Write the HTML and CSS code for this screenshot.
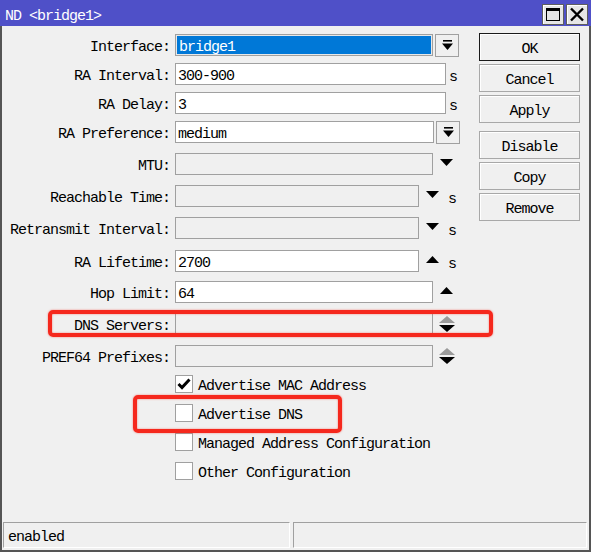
FILE: index.html
```html
<!DOCTYPE html>
<html>
<head>
<meta charset="utf-8">
<link rel="stylesheet" href="styles.css">
</head>
<body>
<div class="window">
  <div class="titlebar">
    <span class="title">ND &lt;bridge1&gt;</span>
    <div class="tb-buttons">
      <span class="tb-btn"><svg width="20" height="19" viewBox="0 0 20 19"><rect x="3.5" y="3.5" width="13" height="12" fill="none" stroke="#000" stroke-width="1"/><rect x="3" y="3" width="14" height="3" fill="#000"/></svg></span>
      <span class="tb-btn"><svg width="20" height="19" viewBox="0 0 20 19"><path d="M4 3.5 L16 15.5 M16 3.5 L4 15.5" stroke="#000" stroke-width="2.4"/></svg></span>
    </div>
  </div>
  <div class="frame">
    <div class="content">
      <div class="form">
        <div class="row g7">
          <label>Interface:</label>
          <div class="field"><div class="input sel w258">bridge1</div><div class="ddbtn"><svg width="11" height="11" viewBox="0 0 11 11"><rect x="1" y="0" width="9" height="1.6" fill="#000"/><polygon points="0,3.5 11,3.5 5.5,10" fill="#000"/></svg></div></div>
        </div>
        <div class="row g7">
          <label>RA Interval:</label>
          <div class="field"><div class="input w271">300-900</div><span class="unit u3">s</span></div>
        </div>
        <div class="row g7">
          <label>RA Delay:</label>
          <div class="field"><div class="input w271">3</div><span class="unit u3">s</span></div>
        </div>
        <div class="row g10">
          <label>RA Preference:</label>
          <div class="field"><div class="input w259">medium</div><div class="ddbtn"><svg width="11" height="11" viewBox="0 0 11 11"><rect x="1" y="0" width="9" height="1.6" fill="#000"/><polygon points="0,3.5 11,3.5 5.5,10" fill="#000"/></svg></div></div>
        </div>
        <div class="row g10">
          <label>MTU:</label>
          <div class="field"><div class="input dis w258"></div><svg class="tri" width="13" height="7" viewBox="0 0 13 7"><polygon points="0,0 13,0 6.5,7" fill="#000"/></svg></div>
        </div>
        <div class="row g10">
          <label>Reachable Time:</label>
          <div class="field"><div class="input dis w244"></div><svg class="tri" width="13" height="7" viewBox="0 0 13 7"><polygon points="0,0 13,0 6.5,7" fill="#000"/></svg><span class="unit u9">s</span></div>
        </div>
        <div class="row g11">
          <label>Retransmit Interval:</label>
          <div class="field"><div class="input dis w244"></div><svg class="tri" width="13" height="7" viewBox="0 0 13 7"><polygon points="0,0 13,0 6.5,7" fill="#000"/></svg><span class="unit u9">s</span></div>
        </div>
        <div class="row g9">
          <label>RA Lifetime:</label>
          <div class="field"><div class="input w244">2700</div><svg class="tri" width="13" height="7" viewBox="0 0 13 7"><polygon points="0,7 13,7 6.5,0" fill="#000"/></svg><span class="unit u9">s</span></div>
        </div>
        <div class="row g10">
          <label>Hop Limit:</label>
          <div class="field"><div class="input w258">64</div><svg class="tri" width="13" height="7" viewBox="0 0 13 7"><polygon points="0,7 13,7 6.5,0" fill="#000"/></svg></div>
        </div>
        <div class="row g10">
          <label>DNS Servers:</label>
          <div class="field"><div class="input dis w258"></div><svg class="updown" width="16" height="17" viewBox="0 0 16 17"><polygon points="0,7 16,7 8,0" fill="#9a9a9a"/><polygon points="0,9 16,9 8,16" fill="#000"/></svg></div>
        </div>
        <div class="row">
          <label>PREF64 Prefixes:</label>
          <div class="field"><div class="input dis w258"></div><svg class="updown" width="16" height="17" viewBox="0 0 16 17"><polygon points="0,7 16,7 8,0" fill="#9a9a9a"/><polygon points="0,9 16,9 8,16" fill="#000"/></svg></div>
        </div>
        <div class="checks">
          <div class="check"><span class="box"><svg width="16" height="16" viewBox="0 0 16 16"><path d="M2.5 8 L6 11.5 L13.5 3.5" fill="none" stroke="#000" stroke-width="3"/></svg></span><span class="ctext">Advertise MAC Address</span></div>
          <div class="check"><span class="box"></span><span class="ctext">Advertise DNS</span></div>
          <div class="check"><span class="box"></span><span class="ctext">Managed Address Configuration</span></div>
          <div class="check"><span class="box"></span><span class="ctext">Other Configuration</span></div>
        </div>
      </div>
      <div class="buttons">
        <div class="btn ok">OK</div>
        <div class="btn">Cancel</div>
        <div class="btn">Apply</div>
        <div class="btn sep">Disable</div>
        <div class="btn">Copy</div>
        <div class="btn">Remove</div>
      </div>
    </div>
    <div class="status">
      <div class="panel p1">enabled</div>
      <div class="panel p2"></div>
    </div>
  </div>
  <div class="hl hl-dns"></div>
  <div class="hl hl-adv"></div>
</div>
</body>
</html>
```
FILE: styles.css
```css
* { box-sizing: border-box; }
html, body { margin: 0; padding: 0; }
body {
  width: 591px;
  height: 552px;
  overflow: hidden;
  background: #f0f0f0;
  color: #000;
  font-family: "Liberation Mono", "DejaVu Sans Mono", monospace;
  font-size: 15px;
  letter-spacing: -1px;
}
.window {
  position: relative;
  width: 591px;
  height: 552px;
  display: flex;
  flex-direction: column;
}
.titlebar {
  height: 26px;
  flex: none;
  background: #4f50c8;
  display: flex;
  align-items: center;
  justify-content: space-between;
  padding: 0 3px 0 5px;
}
.title { color: #fff; margin-top: 7px; }
.tb-buttons { display: flex; gap: 2px; margin-top: 3px; }
.tb-btn {
  width: 22px;
  height: 21px;
  border: 1px solid #5e5e5e;
  background: #e6e6e6;
  box-shadow: inset 1px 1px 0 #fff;
  display: flex;
  align-items: center;
  justify-content: center;
}
.frame {
  flex: 1;
  display: flex;
  flex-direction: column;
  border: 2px solid #555;
  border-top: 0;
}
.content {
  flex: 1;
  display: flex;
  padding-top: 8px;
}
.form { width: 477px; }
.row {
  display: grid;
  grid-template-columns: 168px auto;
  column-gap: 5px;
  height: 22px;
  align-items: center;
}
.g7 { margin-bottom: 7px; }
.g9 { margin-bottom: 9px; }
.g10 { margin-bottom: 10px; }
.g11 { margin-bottom: 11px; }
.row label { text-align: right; white-space: nowrap; padding-top: 5px; }
.field { display: flex; align-items: center; height: 22px; }
.input {
  height: 22px;
  border: 1px solid #a0a0a0;
  background: #fff;
  padding: 3px 0 0 2px;
  line-height: 19px;
  white-space: nowrap;
}
.input.dis { background: #f0f0f0; }
.input.sel { background: #0078d7; color: #fff; box-shadow: inset 0 0 0 1px #e8e8e8; padding-left: 3px; }
.w258 { width: 258px; }
.w259 { width: 259px; }
.w271 { width: 271px; }
.w244 { width: 244px; }
.ddbtn {
  width: 24px;
  height: 23px;
  margin-left: 2px;
  border: 1px solid #a0a0a0;
  background: #f0f0f0;
  display: flex;
  align-items: center;
  justify-content: center;
}
.unit { line-height: 14px; }
.u3 { margin-left: 3px; margin-top: 7px; }
.u9 { margin-left: 9px; margin-top: 7px; }
.tri { margin-left: 7px; margin-top: -4px; flex: none; }
.updown { margin-left: 6px; flex: none; }
.checks { padding-left: 173px; margin-top: 8px; }
.check {
  display: flex;
  align-items: center;
  height: 18px;
  margin-bottom: 11px;
  white-space: nowrap;
}
.ctext { padding-top: 5px; }
.box {
  width: 18px;
  height: 18px;
  border: 1px solid #a0a0a0;
  background: #fff;
  margin-right: 5px;
  display: flex;
  align-items: center;
  justify-content: center;
}
.buttons {
  width: 101px;
  display: flex;
  flex-direction: column;
  margin-top: -1px;
}
.btn {
  height: 28px;
  margin-bottom: 3px;
  padding-top: 4px;
  border: 1px solid #a8a8a8;
  background: #f0f0f0;
  box-shadow: inset 1px 1px 0 #fff;
  display: flex;
  align-items: center;
  justify-content: center;
}
.btn.ok { border-color: #1a1a1a; }
.btn.sep { margin-top: 5px; }
.status {
  flex: none;
  display: flex;
  gap: 3px;
  padding: 0 2px 2px 1px;
}
.panel {
  height: 26px;
  border-top: 1px solid #a0a0a0;
  border-left: 1px solid #a0a0a0;
  border-bottom: 1px solid #fff;
  border-right: 1px solid #fff;
  padding: 4px 0 0 4px;
  line-height: 21px;
}
.p1 { width: 287px; }
.p2 { flex: 1; }
.hl {
  position: absolute;
  border: 4px solid #f5281d;
  border-radius: 5px;
  box-shadow: 0 0 2px rgba(245, 40, 29, 0.6), inset 0 0 2px rgba(245, 40, 29, 0.6);
}
.hl-dns { left: 48px; top: 310px; width: 445px; height: 27px; }
.hl-adv { left: 133px; top: 395px; width: 209px; height: 38px; }
```
